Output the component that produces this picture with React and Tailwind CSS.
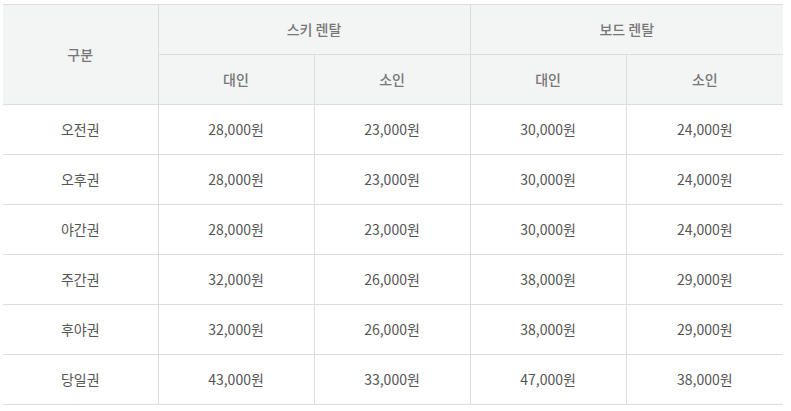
import React from "react";

const rows = [
  ["오전권", "28,000원", "23,000원", "30,000원", "24,000원"],
  ["오후권", "28,000원", "23,000원", "30,000원", "24,000원"],
  ["야간권", "28,000원", "23,000원", "30,000원", "24,000원"],
  ["주간권", "32,000원", "26,000원", "38,000원", "29,000원"],
  ["후야권", "32,000원", "26,000원", "38,000원", "29,000원"],
  ["당일권", "43,000원", "33,000원", "47,000원", "38,000원"],
];

export default function App() {
  return (
    <div
      className="bg-white pl-[3px] pt-[4px] w-[791px] h-[411px]"
      style={{ fontFamily: '"Noto Sans CJK KR", "Noto Sans", sans-serif' }}
    >
      <table className="w-[780px] table-fixed border-collapse text-[14px] text-center">
        <colgroup>
          <col className="w-[155px]" />
          <col className="w-[156px]" />
          <col className="w-[156px]" />
          <col className="w-[156px]" />
          <col className="w-[157px]" />
        </colgroup>
        <thead className="bg-[#f3f4f4] text-[#777] font-medium">
          <tr className="h-[50px] border-t border-[#dcdcdc]">
            <th rowSpan={2} className="font-medium border-b border-r border-[#dcdcdc]">구분</th>
            <th colSpan={2} className="font-medium border-b border-r border-[#dcdcdc]">스키 렌탈</th>
            <th colSpan={2} className="font-medium border-b border-[#dcdcdc]">보드 렌탈</th>
          </tr>
          <tr className="h-[50px]">
            <th className="font-medium border-b border-r border-[#dcdcdc]">대인</th>
            <th className="font-medium border-b border-r border-[#dcdcdc]">소인</th>
            <th className="font-medium border-b border-r border-[#dcdcdc]">대인</th>
            <th className="font-medium border-b border-[#dcdcdc]">소인</th>
          </tr>
        </thead>
        <tbody className="text-[#555]">
          {rows.map((r, i) => (
            <tr key={i} className="h-[50px]">
              {r.map((c, j) => (
                <td
                  key={j}
                  className={
                    j < 4
                      ? "border-b border-r border-[#dcdcdc]"
                      : "border-b border-[#dcdcdc]"
                  }
                >
                  {c}
                </td>
              ))}
            </tr>
          ))}
        </tbody>
      </table>
    </div>
  );
}
